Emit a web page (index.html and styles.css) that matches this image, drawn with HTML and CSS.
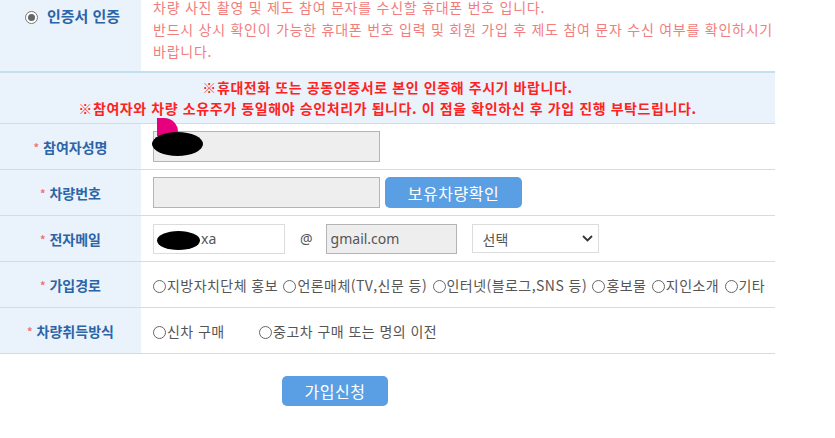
FILE: index.html
```html
<!DOCTYPE html>
<html lang="ko">
  <head>
    <meta charset="UTF-8" />
    <meta name="viewport" content="width=device-width, initial-scale=1.0" />
    <title>회원가입</title>
    <link rel="stylesheet" href="styles.css">
  </head>
  <body>
    <div class="joinWrap">
      <table class="joinTable">
        <tr class="certRow">
          <th>
            <span class="radio checked"></span>
            <span class="certLabel">인증서 인증</span>
          </th>
          <td class="certInfo">
            차량 사진 촬영 및 제도 참여 문자를 수신할 휴대폰 번호 입니다.<br>
            반드시 상시 확인이 가능한 휴대폰 번호 입력 및 회원 가입 후 제도 참여 문자 수신 여부를 확인하시기<br>
            바랍니다.
          </td>
        </tr>
        <tr class="noticeRow">
          <td colspan="2">
            ※휴대전화 또는 공동인증서로 본인 인증해 주시기 바랍니다.<br>
            ※참여자와 차량 소유주가 동일해야 승인처리가 됩니다. 이 점을 확인하신 후 가입 진행 부탁드립니다.
          </td>
        </tr>
        <tr>
          <th><span class="req">*</span> 참여자성명</th>
          <td>
            <div class="field">
              <input class="txt readonly nameInput" type="text" value="" readonly>
              <!-- masked in the capture -->
              <span class="mask pink"></span>
              <span class="mask nameMask"></span>
            </div>
          </td>
        </tr>
        <tr>
          <th><span class="req">*</span> 차량번호</th>
          <td>
            <div class="field">
              <input class="txt readonly carInput" type="text" readonly>
              <button class="btn checkCar" type="button">보유차량확인</button>
            </div>
          </td>
        </tr>
        <tr>
          <th><span class="req">*</span> 전자메일</th>
          <td>
            <div class="field">
              <div class="mailId">
                <input class="txt mailInput" type="text" value="xa">
                <span class="mask mailMask"></span>
              </div>
              <span class="at">@</span>
              <input class="txt readonly domainInput" type="text" value="gmail.com" readonly>
              <div class="selectBox">
                <span>선택</span>
                <svg width="11" height="7" viewBox="0 0 11 7"><path d="M1 1l4.5 4.5L10 1" fill="none" stroke="#333" stroke-width="1.8"/></svg>
              </div>
            </div>
          </td>
        </tr>
        <tr>
          <th><span class="req">*</span> 가입경로</th>
          <td class="options">
            <label><span class="radio"></span>지방자치단체 홍보</label>
            <label><span class="radio"></span>언론매체(TV,신문 등)</label>
            <label><span class="radio"></span>인터넷(블로그,SNS 등)</label>
            <label><span class="radio"></span>홍보물</label>
            <label><span class="radio"></span>지인소개</label>
            <label><span class="radio"></span>기타</label>
          </td>
        </tr>
        <tr>
          <th><span class="req">*</span> 차량취득방식</th>
          <td class="options acquire">
            <label><span class="radio"></span>신차 구매</label>
            <label><span class="radio"></span>중고차 구매 또는 명의 이전</label>
          </td>
        </tr>
      </table>

      <div class="submitArea">
        <button class="btn submit" type="button">가입신청</button>
      </div>
    </div>
  </body>
</html>
```

FILE: styles.css
```css
* {
  box-sizing: border-box;
}
body {
  margin: 0;
  font-family: "Noto Sans CJK KR", "Noto Sans", sans-serif;
  font-size: 14px;
  color: #555;
  background: #fff;
}

.joinWrap {
  margin-top: -15px;
}

.joinTable {
  width: 775px;
  border-collapse: collapse;
  table-layout: fixed;
}

.joinTable th,
.joinTable td {
  height: 46px;
  padding: 0;
  border-bottom: 1px solid #c8dfef;
  vertical-align: middle;
  line-height: 20px;
}

.joinTable th {
  width: 141px;
  background-color: #eaf3fb;
  color: #2c64a8;
  font-size: 14px;
  font-weight: bold;
  text-align: center;
  white-space: nowrap;
}

.joinTable td {
  padding-left: 12px;
}

.req {
  color: #f07474;
  font-size: 11px;
  vertical-align: 1px;
}

/* cert row */
.certRow th {
  vertical-align: top;
  padding-top: 21px;
  text-align: left;
  padding-left: 25px;
}
.certRow th .radio {
  margin-right: 5px;
}
.certLabel {
  font-size: 15px;
}
.certInfo {
  padding: 11px 0 9px 12px !important;
  color: #f27d7d;
  line-height: 22px !important;
  letter-spacing: 0.75px;
  white-space: nowrap;
}

/* notice row */
.noticeRow td {
  padding: 4px 0 !important;
  background-color: #eaf3fb;
  border-top: 2px solid #c3dff0;
  color: #ff2222;
  font-weight: bold;
  text-align: center;
  line-height: 21px !important;
  letter-spacing: 0.6px;
  white-space: nowrap;
}

/* fields */
.field {
  display: flex;
  align-items: center;
  position: relative;
}

.txt {
  height: 31px;
  padding: 0 4px;
  border: 1px solid #dcdcdc;
  background: #fff;
  font-family: "Noto Sans", sans-serif;
  font-size: 14px;
  color: #555;
  outline: none;
}
.readonly {
  background-color: #eee;
  border-color: #b4b4b4;
}
.nameInput,
.carInput {
  width: 227px;
}
.mailId {
  position: relative;
}
.mailInput {
  width: 132px;
  height: 30px;
  padding-left: 47px;
}
.at {
  margin: 0 13px 0 15px;
  font-family: "Noto Sans", sans-serif;
  color: #555;
}
.domainInput {
  width: 131px;
  height: 30px;
}

.selectBox {
  display: flex;
  align-items: center;
  justify-content: space-between;
  width: 127px;
  height: 29px;
  margin-left: 15px;
  padding: 0 5px 0 10px;
  border: 1px solid #dcdcdc;
  color: #555;
}

.btn {
  border: none;
  border-radius: 5px;
  background-color: #5a9fe4;
  color: #fff;
  font-family: "Noto Sans CJK KR", sans-serif;
  font-size: 16px;
  cursor: pointer;
}
.checkCar {
  width: 137px;
  height: 31px;
  margin-left: 5px;
  letter-spacing: 0.5px;
}

/* radio options */
.radio {
  display: inline-block;
  width: 13px;
  height: 13px;
  border: 1px solid #666;
  border-radius: 50%;
  vertical-align: -2px;
  margin-right: 1px;
  background: #fff;
}
.radio.checked {
  position: relative;
  border-color: #777;
}
.radio.checked::after {
  content: "";
  position: absolute;
  top: 2px;
  left: 2px;
  width: 7px;
  height: 7px;
  border-radius: 50%;
  background: #666;
}

.options {
  white-space: nowrap;
  color: #555;
  letter-spacing: 0.45px;
}
.options label {
  margin-right: 1px;
}
.acquire label:first-child {
  margin-right: 30px;
}

/* redaction blobs from the capture */
.mask {
  position: absolute;
  background: #000;
  border-radius: 50%;
}
.nameMask {
  left: -1px;
  top: 1px;
  width: 51px;
  height: 24px;
}
.pink {
  left: 4px;
  top: -13px;
  width: 21px;
  height: 18px;
  background: #e6007e;
  border-radius: 0 14px 0 0;
}
.mailMask {
  left: 4px;
  top: 7px;
  width: 43px;
  height: 19px;
}

.submitArea {
  padding: 22px 0 0 282px;
}
.submit {
  width: 106px;
  height: 30px;
  letter-spacing: 0.5px;
}
```
